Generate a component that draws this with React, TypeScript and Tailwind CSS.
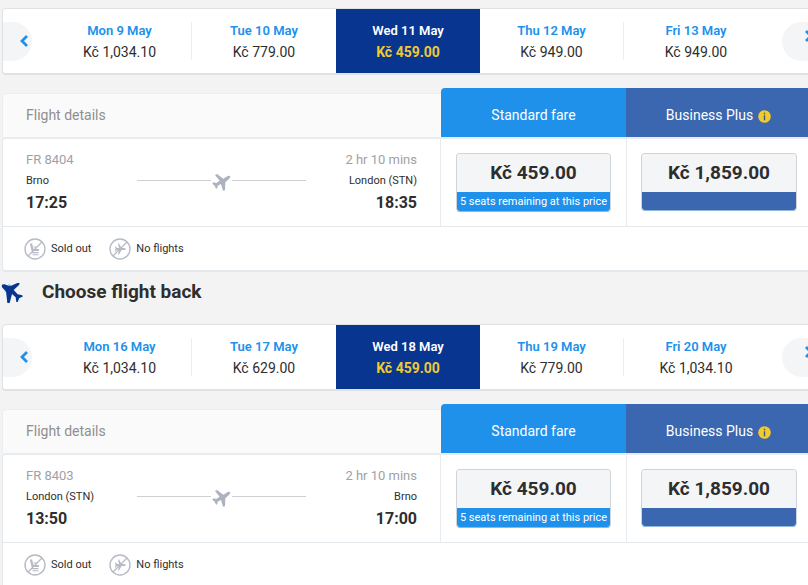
type Day = { date: string; price: string; selected?: boolean };

type Flight = {
  number: string;
  duration: string;
  from: string;
  to: string;
  departs: string;
  arrives: string;
};

const outboundDays: Day[] = [
  { date: "Mon 9 May", price: "Kč 1,034.10" },
  { date: "Tue 10 May", price: "Kč 779.00" },
  { date: "Wed 11 May", price: "Kč 459.00", selected: true },
  { date: "Thu 12 May", price: "Kč 949.00" },
  { date: "Fri 13 May", price: "Kč 949.00" },
];

const returnDays: Day[] = [
  { date: "Mon 16 May", price: "Kč 1,034.10" },
  { date: "Tue 17 May", price: "Kč 629.00" },
  { date: "Wed 18 May", price: "Kč 459.00", selected: true },
  { date: "Thu 19 May", price: "Kč 779.00" },
  { date: "Fri 20 May", price: "Kč 1,034.10" },
];

function Chevron({ flip }: { flip?: boolean }) {
  return (
    <svg width="8" height="12" viewBox="0 0 8 12" fill="none" stroke="#2091eb" strokeWidth="2.8" aria-hidden="true">
      <path d={flip ? "M1 1l5 5-5 5" : "M7 1L2 6l5 5"} />
    </svg>
  );
}

function DayStrip({ days }: { days: Day[] }) {
  return (
    <div className="ml-0.5 -mr-1.5 flex overflow-hidden rounded border border-b-2 border-[#dfe1e3] bg-white">
      <div className="flex w-[45px] shrink-0 items-center">
        <button aria-label="Previous days" className="flex h-[39px] w-[29px] items-center justify-end rounded-r-full bg-[#f4f5f7] pr-1">
          <Chevron />
        </button>
      </div>
      {days.map((day, i) => (
        <button
          key={day.date}
          className={
            "flex h-16 flex-1 items-center " + (day.selected ? "bg-[#073590]" : "bg-white")
          }
        >
          <span
            className={
              "flex h-[38px] flex-1 flex-col justify-center text-center " +
              (i === 0 || i === 3 ? "border-r border-[#eceef0]" : "")
            }
          >
            <span className={"text-[13px] leading-[23px] font-semibold " + (day.selected ? "text-white" : "text-[#2091eb]")}>
              {day.date}
            </span>
            <span className={"text-[14px] leading-[21px] " + (day.selected ? "font-bold text-[#f1c933]" : "text-[#2e2e2e]")}>
              {day.price}
            </span>
          </span>
        </button>
      ))}
      <div className="flex w-[45px] shrink-0 items-center justify-end">
        <button aria-label="Next days" className="flex h-[39px] w-[31px] items-start justify-end rounded-l-full bg-[#f4f5f7] pt-2">
          <Chevron flip />
        </button>
      </div>
    </div>
  );
}

function InfoIcon() {
  return (
    <svg width="13" height="13" viewBox="0 0 13 13" className="mt-0.5" aria-hidden="true">
      <circle cx="6.5" cy="6.5" r="6.3" fill="#f1c933" />
      <path d="M5.8 2.7h1.4v1.6H5.8zM5.8 5.2h1.4v5H5.8z" fill="#3b5a80" />
    </svg>
  );
}

function RoutePlane() {
  return (
    <svg width="19" height="20" viewBox="0 0 57 60" fill="#adb2be" className="mt-0.5" aria-hidden="true">
      <path d="M47 12Q54 10 55 13Q55 18 50 22L40 31L39 55L33 56L27 36L17 41L16 49L12 50L8 41L1 35L4 31L13 33L23 26L9 9L15 6L34 20Z" />
    </svg>
  );
}

function HeadingPlane() {
  return (
    <svg width="22" height="22" viewBox="0 0 66 66" fill="#073590" className="mt-0.5" aria-hidden="true">
      <path d="M21 7l8 2-2 5zM10 26l5-2 1 7z" fill="#2091eb" />
      <path d="M2 11Q2 7 10 7L27 13L49 3L56 3L54 9L38 24L50 37L64 40L65 44L55 48L50 60L46 60L44 46L33 36L26 63L19 63L15 28L4 17Z" />
    </svg>
  );
}

function SoldOutIcon() {
  return (
    <svg width="22" height="22" viewBox="0 0 22 22" fill="none" stroke="#b6bac3" aria-hidden="true">
      <circle cx="11" cy="11" r="10" strokeWidth="1.4" />
      <path d="M7 5.5l1.5 6.5h6.5" strokeWidth="2.2" />
      <path d="M9.5 9h3.5M7 14.6h7.5M8.5 16.8h6" strokeWidth="1.1" />
      <path d="M4 18L18 4" strokeWidth="1.2" />
    </svg>
  );
}

function NoFlightsIcon() {
  return (
    <svg width="22" height="22" viewBox="0 0 22 22" fill="none" stroke="#b6bac3" aria-hidden="true">
      <circle cx="11" cy="11" r="10" strokeWidth="1.4" />
      <path
        d="M17 11q-.5 1-2 1h-2.500l-2.500 4.500H9l1-4.500H8l-1.200 1.500H6l.5-2.500-.5-2.500h.8L8 10h2L9 5.500h1L12.500 10H15q1.500 0 2 1z"
        fill="#b6bac3"
        stroke="none"
      />
      <path d="M4 18L18 4" strokeWidth="1.2" />
    </svg>
  );
}

function FlightTable({ flight }: { flight: Flight }) {
  const priceClass =
    "flex h-[38px] items-center justify-center bg-[#f4f5f7] text-[19px] leading-6 font-bold text-[#2e2e2e]";
  return (
    <div className="mt-[13px] -mr-[3px] ml-0.5">
      <div className="flex items-end">
        <h3 className="h-11 flex-1 rounded-tl border-t border-l border-[#ebedef] bg-[#fafafa] pl-[23px] text-[14px] leading-[43px] font-normal text-[#8f8f8f]">
          Flight details
        </h3>
        <h3 className="h-[49px] w-[185px] rounded-tl bg-[#2091eb] text-center text-[14px] leading-[54px] font-normal text-white">
          Standard fare
        </h3>
        <h3 className="flex h-[49px] w-[185px] items-center justify-center gap-[5px] bg-[#3b66b0] pt-[5px] text-[14px] leading-5 font-normal text-white">
          Business Plus
          <InfoIcon />
        </h3>
      </div>
      <div className="rounded-l border border-t-2 border-r-0 border-b-2 border-[#e3e8ed] border-t-[#e9ecef] bg-white">
        <div className="flex h-[88px] border-b border-[#e3e8ed]">
          <div className="flex flex-1 items-stretch justify-between border-r border-[#e9ecef] pt-2.5 pr-[23px] pl-[23px]">
            <div className="w-[90px]">
              <p className="text-[13px] leading-[22px] text-[#9fa1a8]">{flight.number}</p>
              <p className="text-[11px] leading-5 text-[#2e2e2e]">{flight.from}</p>
              <p className="text-[16px] leading-[23px] font-bold text-[#2e2e2e]">{flight.departs}</p>
            </div>
            <div className="flex h-[63px] w-[169px] items-center gap-px">
              <span className="h-px flex-1 bg-[#cdcfd3]" />
              <RoutePlane />
              <span className="h-px flex-1 bg-[#cdcfd3]" />
            </div>
            <div className="w-[90px] text-right">
              <p className="text-[13px] leading-[22px] text-[#9fa1a8]">{flight.duration}</p>
              <p className="text-[11px] leading-5 text-[#2e2e2e]">{flight.to}</p>
              <p className="text-[16px] leading-[23px] font-bold text-[#2e2e2e]">{flight.arrives}</p>
            </div>
          </div>
          <div className="w-[185px] px-[15px] pt-3.5">
            <button className="w-full overflow-hidden rounded border border-[#cfd4d9] border-b-[#8fb8dc]">
              <span className={priceClass}>{"Kč 459.00"}</span>
              <span className="block h-[19px] bg-[#2091eb] text-[11px] leading-[19px] whitespace-nowrap text-white">
                5 seats remaining at this price
              </span>
            </button>
          </div>
          <div className="w-[185px] border-l border-[#e9ecef] px-[14px] pt-3.5">
            <button className="w-full overflow-hidden rounded border border-[#cfd4d9] border-b-[#8fb8dc]">
              <span className={priceClass}>{"Kč 1,859.00"}</span>
              <span className="block h-[18px] bg-[#3b66b0]" />
            </button>
          </div>
        </div>
        <div className="flex h-[43px] items-center gap-[18px] pl-[21px] text-[11px] leading-[18px] text-[#2e2e2e]">
          <span className="flex items-center gap-[5px]">
            <SoldOutIcon />
            Sold out
          </span>
          <span className="flex items-center gap-[5px]">
            <NoFlightsIcon />
            No flights
          </span>
        </div>
      </div>
    </div>
  );
}

export default function App() {
  return (
    <main className="h-screen overflow-hidden bg-[#f3f3f3] pt-2 font-[Roboto,sans-serif]">
      <DayStrip days={outboundDays} />
      <FlightTable
        flight={{ number: "FR 8404", duration: "2 hr 10 mins", from: "Brno", to: "London (STN)", departs: "17:25", arrives: "18:35" }}
      />
      <div className="flex h-[52px] items-center gap-[19px] pb-3 pl-px">
        <HeadingPlane />
        <h2 className="text-[19px] leading-[26px] font-bold text-[#2e2e2e]">Choose flight back</h2>
      </div>
      <DayStrip days={returnDays} />
      <FlightTable
        flight={{ number: "FR 8403", duration: "2 hr 10 mins", from: "London (STN)", to: "Brno", departs: "13:50", arrives: "17:00" }}
      />
    </main>
  );
}
